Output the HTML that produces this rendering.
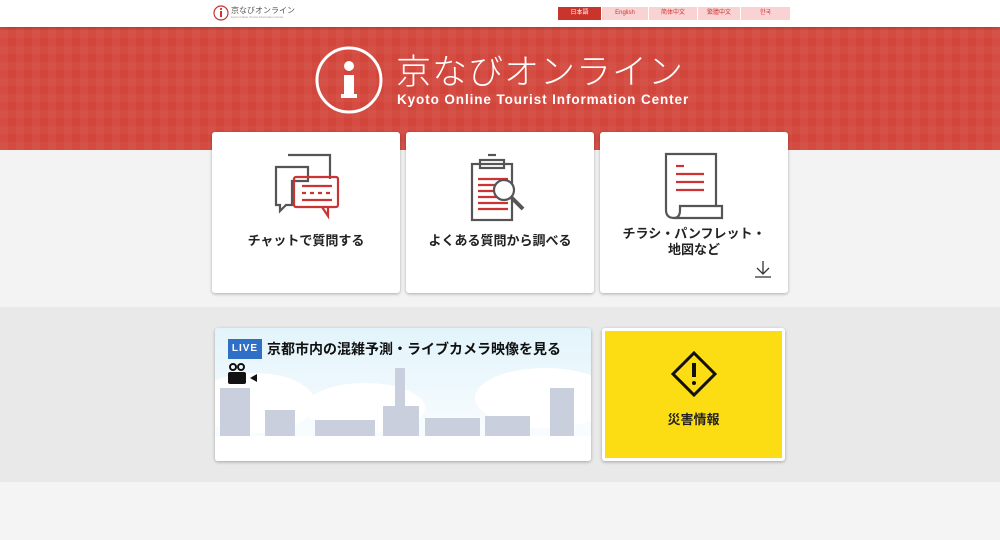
<!DOCTYPE html>
<html><head><meta charset="utf-8"><style>
*{margin:0;padding:0;box-sizing:border-box}
body{width:1000px;height:540px;overflow:hidden;background:#f4f4f4;font-family:"Liberation Sans","Noto Sans CJK JP",sans-serif;position:relative}
.hdr{position:absolute;left:0;top:0;width:1000px;height:27px;background:#fff;box-shadow:0 1px 3px rgba(0,0,0,.2);z-index:2}
.red{position:absolute;left:0;top:27px;width:1000px;height:123px;background:#d2453b;
background-image:repeating-linear-gradient(90deg,rgba(255,255,255,.04) 0 8px,transparent 8px 16px),repeating-linear-gradient(0deg,rgba(255,255,255,.03) 0 8px,transparent 8px 16px);}
.g1{position:absolute;left:0;top:150px;width:1000px;height:157px;background:#f3f3f3}
.g2{position:absolute;left:0;top:307px;width:1000px;height:175px;background:#e9e9e9}
.lang{position:absolute;top:7px;height:13px;font-size:6px;line-height:13px;text-align:center;color:#c33;background:#f9d3d3}
.card{position:absolute;top:132px;height:161px;background:#fff;border-radius:3px;box-shadow:0 1px 3px rgba(0,0,0,.3);text-align:center;font-size:13px;color:#222;font-weight:bold}
.card .t{position:absolute;left:0;right:0}
.b{position:absolute;background:#c9cfdc}
</style></head><body>
<div class="hdr">
 <svg style="position:absolute;left:213px;top:5px" width="16" height="16"><circle cx="8" cy="8" r="7" fill="none" stroke="#c33" stroke-width="1.2"/><rect x="7" y="6" width="2" height="6" fill="#c33"/><circle cx="8" cy="4" r="1.1" fill="#c33"/></svg>
 <div style="position:absolute;left:231px;top:5px;font-size:8px;color:#555">京なびオンライン</div>
 <div style="position:absolute;left:231px;top:15px;font-size:3px;color:#999">Kyoto Online Tourist Information Center</div>
 <div class="lang" style="left:558px;width:43px;background:#c9342d;color:#fff">日本語</div>
 <div class="lang" style="left:602px;width:46px">English</div>
 <div class="lang" style="left:649px;width:48px">简体中文</div>
 <div class="lang" style="left:698px;width:42px">繁體中文</div>
 <div class="lang" style="left:741px;width:49px">한국</div>
</div>
<div class="red"></div>
<div class="g1"></div><div class="g2"></div>
<svg style="position:absolute;left:314px;top:45px" width="70" height="70"><circle cx="35" cy="35" r="32" fill="none" stroke="#fff" stroke-width="3"/><rect x="30" y="30" width="10" height="22" fill="#fff"/><rect x="27" y="49" width="16" height="4" fill="#fff"/><circle cx="35" cy="21" r="5" fill="#fff"/></svg>
<div style="position:absolute;left:396px;top:50px;font-size:35px;line-height:40px;color:#fff;letter-spacing:1px;font-family:'Noto Sans CJK JP',sans-serif;font-weight:300">京なびオンライン</div>
<div style="position:absolute;left:397px;top:92px;font-size:13.5px;color:#fff;letter-spacing:.9px;font-weight:bold">Kyoto Online Tourist Information Center</div>

<div class="card" style="left:212px;width:188px">
 <svg style="position:absolute;left:60px;top:20px" width="70" height="70" fill="none" stroke-width="2.2"><path d="M16 3h42v24" stroke="#555"/><path d="M4 15h32v14H20v24h-6l-6 6v-6H4z" stroke="#555"/><rect x="22" y="25" width="44" height="30" rx="2" stroke="#c33"/><path d="M50 55l6 9v-9" stroke="#c33"/><path d="M30 34h30M30 41h4M38 41h4M46 41h4M54 41h4M30 48h30" stroke="#c33"/></svg>
 <div class="t" style="top:98px">チャットで質問する</div></div>
<div class="card" style="left:406px;width:188px">
 <svg style="position:absolute;left:62px;top:20px" width="70" height="72" fill="none" stroke-width="2.2"><rect x="4" y="12" width="40" height="56" stroke="#555"/><rect x="12" y="8" width="24" height="8" stroke="#555"/><path d="M20 3h8" stroke="#555"/><path d="M10 27h30M10 33h30M10 39h30M10 45h30M10 51h30M10 57h30" stroke="#c33"/><circle cx="36" cy="38" r="10" fill="#fff" stroke="#555"/><path d="M43 45l12 12" stroke="#555" stroke-width="4"/></svg>
 <div class="t" style="top:98px">よくある質問から調べる</div></div>
<div class="card" style="left:600px;width:188px">
 <svg style="position:absolute;left:62px;top:20px" width="62" height="70" fill="none" stroke-width="2.2"><path d="M4 2h50v52h6v12H12q-8 0-8-8z" stroke="#555"/><path d="M12 66q6 0 6-8v-4h36" stroke="#555"/><path d="M14 14h8M14 22h28M14 30h28M14 38h28" stroke="#c33"/></svg>
 <div class="t" style="top:94px;line-height:16px">チラシ・パンフレット・<br>地図など</div>
 <svg style="position:absolute;left:154px;top:128px" width="18" height="18" fill="none" stroke="#333" stroke-width="1.3"><path d="M9 1v13M3 8l6 6 6-6M1 17h16"/></svg></div>

<div style="position:absolute;left:215px;top:328px;width:376px;height:133px;border-radius:3px;box-shadow:0 1px 3px rgba(0,0,0,.3);overflow:hidden;background:linear-gradient(#e2f4fb,#f3fafd 60%,#fff)">
 <div style="position:absolute;left:-20px;top:45px;width:120px;height:60px;border-radius:50%;background:#fff"></div>
 <div style="position:absolute;left:90px;top:55px;width:120px;height:50px;border-radius:50%;background:#fff"></div>
 <div style="position:absolute;left:260px;top:40px;width:140px;height:60px;border-radius:50%;background:#fff"></div>
 <div class="b" style="left:5px;top:60px;width:30px;height:55px"></div>
 <div class="b" style="left:50px;top:82px;width:30px;height:30px"></div>
 <div class="b" style="left:100px;top:92px;width:60px;height:22px"></div>
 <div class="b" style="left:180px;top:40px;width:10px;height:45px"></div>
 <div class="b" style="left:168px;top:78px;width:36px;height:34px"></div>
 <div class="b" style="left:210px;top:90px;width:55px;height:22px"></div>
 <div class="b" style="left:270px;top:88px;width:45px;height:24px"></div>
 <div class="b" style="left:335px;top:60px;width:24px;height:55px"></div>
 <div style="position:absolute;left:0;top:108px;width:376px;height:25px;background:#fff"></div>
 <div style="position:absolute;left:13px;top:11px;width:34px;height:20px;background:#2f6fc6;color:#fff;font-size:10px;font-weight:bold;line-height:20px;text-align:center;letter-spacing:1px">LIVE</div>
 <div style="position:absolute;left:52px;top:11px;font-size:14px;line-height:20px;color:#111;font-weight:bold">京都市内の混雑予測・ライブカメラ映像を見る</div>
 <div style="position:absolute;left:13px;top:44px;width:18px;height:12px;background:#111;border-radius:2px"></div>
 <div style="position:absolute;left:14px;top:35px;width:8px;height:8px;border:2px solid #111;border-radius:50%"></div>
 <div style="position:absolute;left:22px;top:35px;width:8px;height:8px;border:2px solid #111;border-radius:50%"></div>
 <div style="position:absolute;left:31px;top:46px;border:4px solid transparent;border-right:7px solid #111"></div>
</div>
<div style="position:absolute;left:602px;top:328px;width:183px;height:133px;background:#fff;border-radius:3px;box-shadow:0 1px 3px rgba(0,0,0,.3)">
 <div style="position:absolute;left:3px;top:3px;right:3px;bottom:3px;background:#fcdc12"></div>
 <svg style="position:absolute;left:68px;top:22px" width="48" height="48" fill="none" stroke="#111" stroke-width="3"><path d="M24 3l21 21-21 21L3 24z"/><path d="M24 13v14" stroke-width="4"/><circle cx="24" cy="33" r="2" fill="#111" stroke="none"/></svg>
 <div style="position:absolute;left:0;right:0;top:81px;text-align:center;font-size:13px;color:#222;font-weight:bold">災害情報</div>
</div>
</body></html>
